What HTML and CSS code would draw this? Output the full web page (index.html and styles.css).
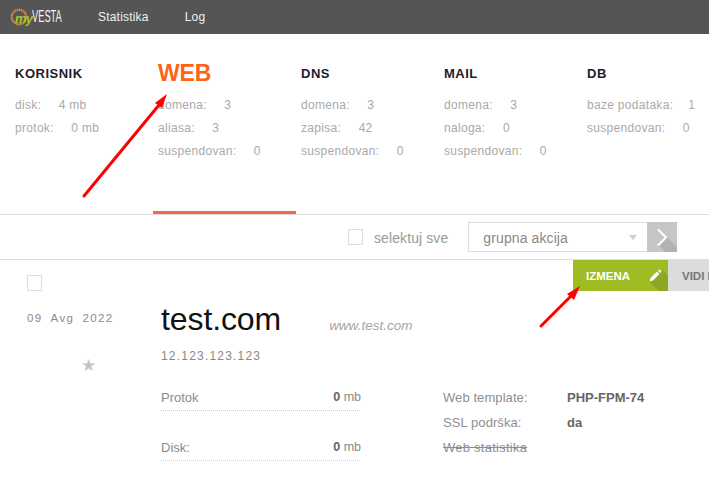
FILE: index.html
```html
<!DOCTYPE html>
<html lang="sr">
<head>
<meta charset="utf-8">
<title>myVESTA</title>
<link rel="stylesheet" href="styles.css">
</head>
<body>
<div class="page">
  <header class="topbar">
    <div class="logo">
      <svg class="logo-mark" width="18" height="18" viewBox="0 0 18 18"><circle cx="9" cy="9" r="7.200" fill="none" stroke="#e8872c" stroke-width="2.400" stroke-dasharray="1.500 .6"/></svg>
      <span class="logo-my">my</span><span class="logo-vesta">VESTA</span>
    </div>
    <a class="nav-link">Statistika</a>
    <a class="nav-link">Log</a>
  </header>

  <section class="stats">
    <div class="stat">
      <h2 class="stat-title">KORISNIK</h2>
      <p class="stat-line"><span>disk:</span><span>4 mb</span></p>
      <p class="stat-line"><span>protok:</span><span>0 mb</span></p>
    </div>
    <div class="stat stat-active">
      <h2 class="stat-title">WEB</h2>
      <p class="stat-line"><span>domena:</span><span>3</span></p>
      <p class="stat-line"><span>aliasa:</span><span>3</span></p>
      <p class="stat-line"><span>suspendovan:</span><span>0</span></p>
    </div>
    <div class="stat">
      <h2 class="stat-title">DNS</h2>
      <p class="stat-line"><span>domena:</span><span>3</span></p>
      <p class="stat-line"><span>zapisa:</span><span>42</span></p>
      <p class="stat-line"><span>suspendovan:</span><span>0</span></p>
    </div>
    <div class="stat">
      <h2 class="stat-title">MAIL</h2>
      <p class="stat-line"><span>domena:</span><span>3</span></p>
      <p class="stat-line"><span>naloga:</span><span>0</span></p>
      <p class="stat-line"><span>suspendovan:</span><span>0</span></p>
    </div>
    <div class="stat">
      <h2 class="stat-title">DB</h2>
      <p class="stat-line stat-line-tight"><span>baze podataka:</span><span>1</span></p>
      <p class="stat-line"><span>suspendovan:</span><span>0</span></p>
    </div>
  </section>

  <section class="toolbar">
    <span class="checkbox"></span>
    <span class="select-all">selektuj sve</span>
    <div class="select"><span>grupna akcija</span><i class="caret"></i></div>
    <button class="go" type="button">
      <svg width="30" height="30" viewBox="0 0 30 30"><path d="M11 23 20 15 30 25V30H18Z" fill="#b2b2b2"/><path d="M11 7.500 19 15.500 11 23.500" fill="none" stroke="#fff" stroke-width="2"/></svg>
    </button>
  </section>

  <section class="row">
    <div class="row-side">
      <span class="checkbox"></span>
      <div class="date"><span>09</span><span>Avg</span><span>2022</span></div>
      <div class="star">★</div>
    </div>
    <div class="row-main">
      <div class="domain-line">
        <span class="domain">test.com</span>
        <span class="alias">www.test.com</span>
      </div>
      <div class="ip">12.123.123.123</div>
      <div class="details">
        <div class="usage">
          <div class="usage-row"><span>Protok</span><span class="usage-value"><b>0</b> mb</span></div>
          <div class="usage-row"><span>Disk:</span><span class="usage-value"><b>0</b> mb</span></div>
        </div>
        <dl class="props">
          <dt>Web template:</dt><dd>PHP-FPM-74</dd>
          <dt>SSL podrška:</dt><dd>da</dd>
          <dt class="off">Web statistika</dt><dd></dd>
        </dl>
      </div>
    </div>
    <div class="row-actions">
      <a class="action action-edit">IZMENA
        <svg class="fold" width="32" height="31" viewBox="0 0 32 31"><path d="M13 21 27 10 32 15V31H23Z" fill="#8aa821"/><path d="M13.500 21.500 14.500 18 21 11.500 23.500 14 17 20.500ZM22 10.500 23.500 9.500 25.500 11.500 24.500 13Z" fill="#fff"/></svg>
      </a>
      <a class="action action-view">VIDI LOGOVE</a>
    </div>
  </section>

  <svg class="annot annot-a" width="100" height="115" viewBox="0 0 100 115"><path d="M2 106 77 15" stroke="#f00" stroke-width="3" stroke-linecap="round"/><path d="M85 4 73 13 80 18Z" fill="#f00"/></svg>
  <svg class="annot annot-b" width="50" height="48" viewBox="0 0 50 48"><path d="M3 43 33 13" stroke="#f00" stroke-width="3" stroke-linecap="round"/><path d="M42 3 29 11 36 17Z" fill="#f00"/></svg>
</div>
</body>
</html>
```
FILE: styles.css
```css
* { box-sizing: border-box; }
html, body { margin: 0; padding: 0; background: #fff; }
body { font-family: "Liberation Sans", Arial, sans-serif; color: #888; overflow: hidden; }
.page { position: relative; width: 709px; height: 489px; overflow: hidden; }

.topbar { height: 34px; background: #555; display: flex; align-items: center; }
.logo { position: relative; width: 98px; height: 34px; display: flex; align-items: center; padding-left: 10px; flex: none; }
.logo-mark { flex: none; margin-top: -1px; }
.logo-my { position: absolute; left: 15px; top: 11px; font: italic bold 13px/16px "Liberation Sans", sans-serif; color: #a4c52f; letter-spacing: -.8px; }
.logo-vesta { position: absolute; left: 32px; top: 8px; font: 16px/18px "Liberation Sans", sans-serif; color: #f4f4f4; transform: scaleX(.58); transform-origin: left; }
.nav-link { color: #f0f0f0; font-size: 12px; letter-spacing: .2px; margin-right: 36px; }

.stats { height: 181px; display: grid; grid-template-columns: repeat(5, 143px); padding-left: 10px; border-bottom: 1px solid #ddd; }
.stat { padding: 31px 0 0 5px; }
.stat-active { border-bottom: 3px solid #f3694a; height: 180px; }
.stat-title { margin: 0 0 16px; font-size: 13px; line-height: 17px; font-weight: bold; color: #1d1d2b; letter-spacing: .5px; }
.stat-active .stat-title { color: #ff6315; font-size: 23px; line-height: 17px; letter-spacing: -.2px; }
.stat-line { margin: 0 0 8px; font-size: 12px; line-height: 15px; color: #a9a9a9; letter-spacing: .3px; display: flex; gap: 17.500px; white-space: nowrap; }
.stat-line-tight { gap: 15px; }

.toolbar { height: 45px; display: flex; align-items: center; border-bottom: 1px solid #ddd; padding-left: 348px; }
.checkbox { display: block; width: 15px; height: 16px; border: 1px solid #ddd; flex: none; }
.select-all { margin: 1px 0 0 11px; font-size: 14px; color: #999; letter-spacing: .1px; }
.select { margin-left: 20px; width: 179px; height: 30px; border: 1px solid #ddd; border-right: 0; display: flex; align-items: center; justify-content: space-between; padding: 1px 10px 0 14px; font-size: 14px; color: #888; letter-spacing: .1px; }
.caret { border: 4px solid transparent; border-top: 5px solid #d0d0d0; border-bottom: 0; }
.go { width: 30px; height: 30px; background: #c6c6c6; border: 0; padding: 0; display: block; }
.go svg { display: block; }

.row { position: relative; display: flex; height: 229px; }
.row-side { width: 161px; flex: none; padding: 15px 0 0 27px; }
.date { margin-top: 20px; font-size: 11.500px; letter-spacing: 1.400px; color: #908a8a; display: flex; gap: 8px; line-height: 14px; }
.star { margin: 31px 0 0 54px; font-size: 17px; line-height: 20px; color: #c4c4c4; }
.row-main { flex: 1; padding-top: 40px; }
.domain-line { display: flex; align-items: baseline; gap: 48px; }
.domain { font-size: 32px; line-height: 38px; color: #111; letter-spacing: -.1px; }
.alias { font-size: 13.500px; font-style: italic; color: #aaa2a2; }
.ip { margin-top: 11px; font-size: 12px; line-height: 15px; letter-spacing: 1.200px; color: #888; }
.details { display: flex; margin-top: 26px; }
.usage { width: 199px; flex: none; }
.usage-row { width: 199px; height: 21px; margin-bottom: 29px; display: flex; justify-content: space-between; font-size: 13px; line-height: 15px; color: #8a8a8a; border-bottom: 1px dotted #ccc; }
.usage-row b { color: #666; }
.usage-value { font-size: 12.500px; margin-right: -1px; }
.props { margin: 0 0 0 83px; display: grid; grid-template-columns: 124px 1fr; grid-auto-rows: 25px; align-content: start; font-size: 13px; line-height: 15px; }
.props dt { color: #8f8f8f; letter-spacing: .08px; }
.props dd { margin: 0; font-size: 13px; font-weight: bold; color: #666; white-space: nowrap; }
.props .off { text-decoration: line-through; letter-spacing: .25px; }

.row-actions { position: absolute; left: 573px; top: 0; display: flex; }
.action { position: relative; height: 31px; display: flex; align-items: center; padding-top: 1px; font-size: 11.500px; font-weight: bold; white-space: nowrap; overflow: hidden; }
.action-edit { width: 95px; padding-left: 13px; background: #9fbc23; color: #fff; }
.fold { position: absolute; right: 0; top: 0; }
.action-view { width: 120px; padding-left: 14px; background: #dcdcdc; color: #777; }

.annot { position: absolute; pointer-events: none; }
.annot-a { left: 82px; top: 90px; }
.annot-b { left: 538px; top: 283px; }
```
